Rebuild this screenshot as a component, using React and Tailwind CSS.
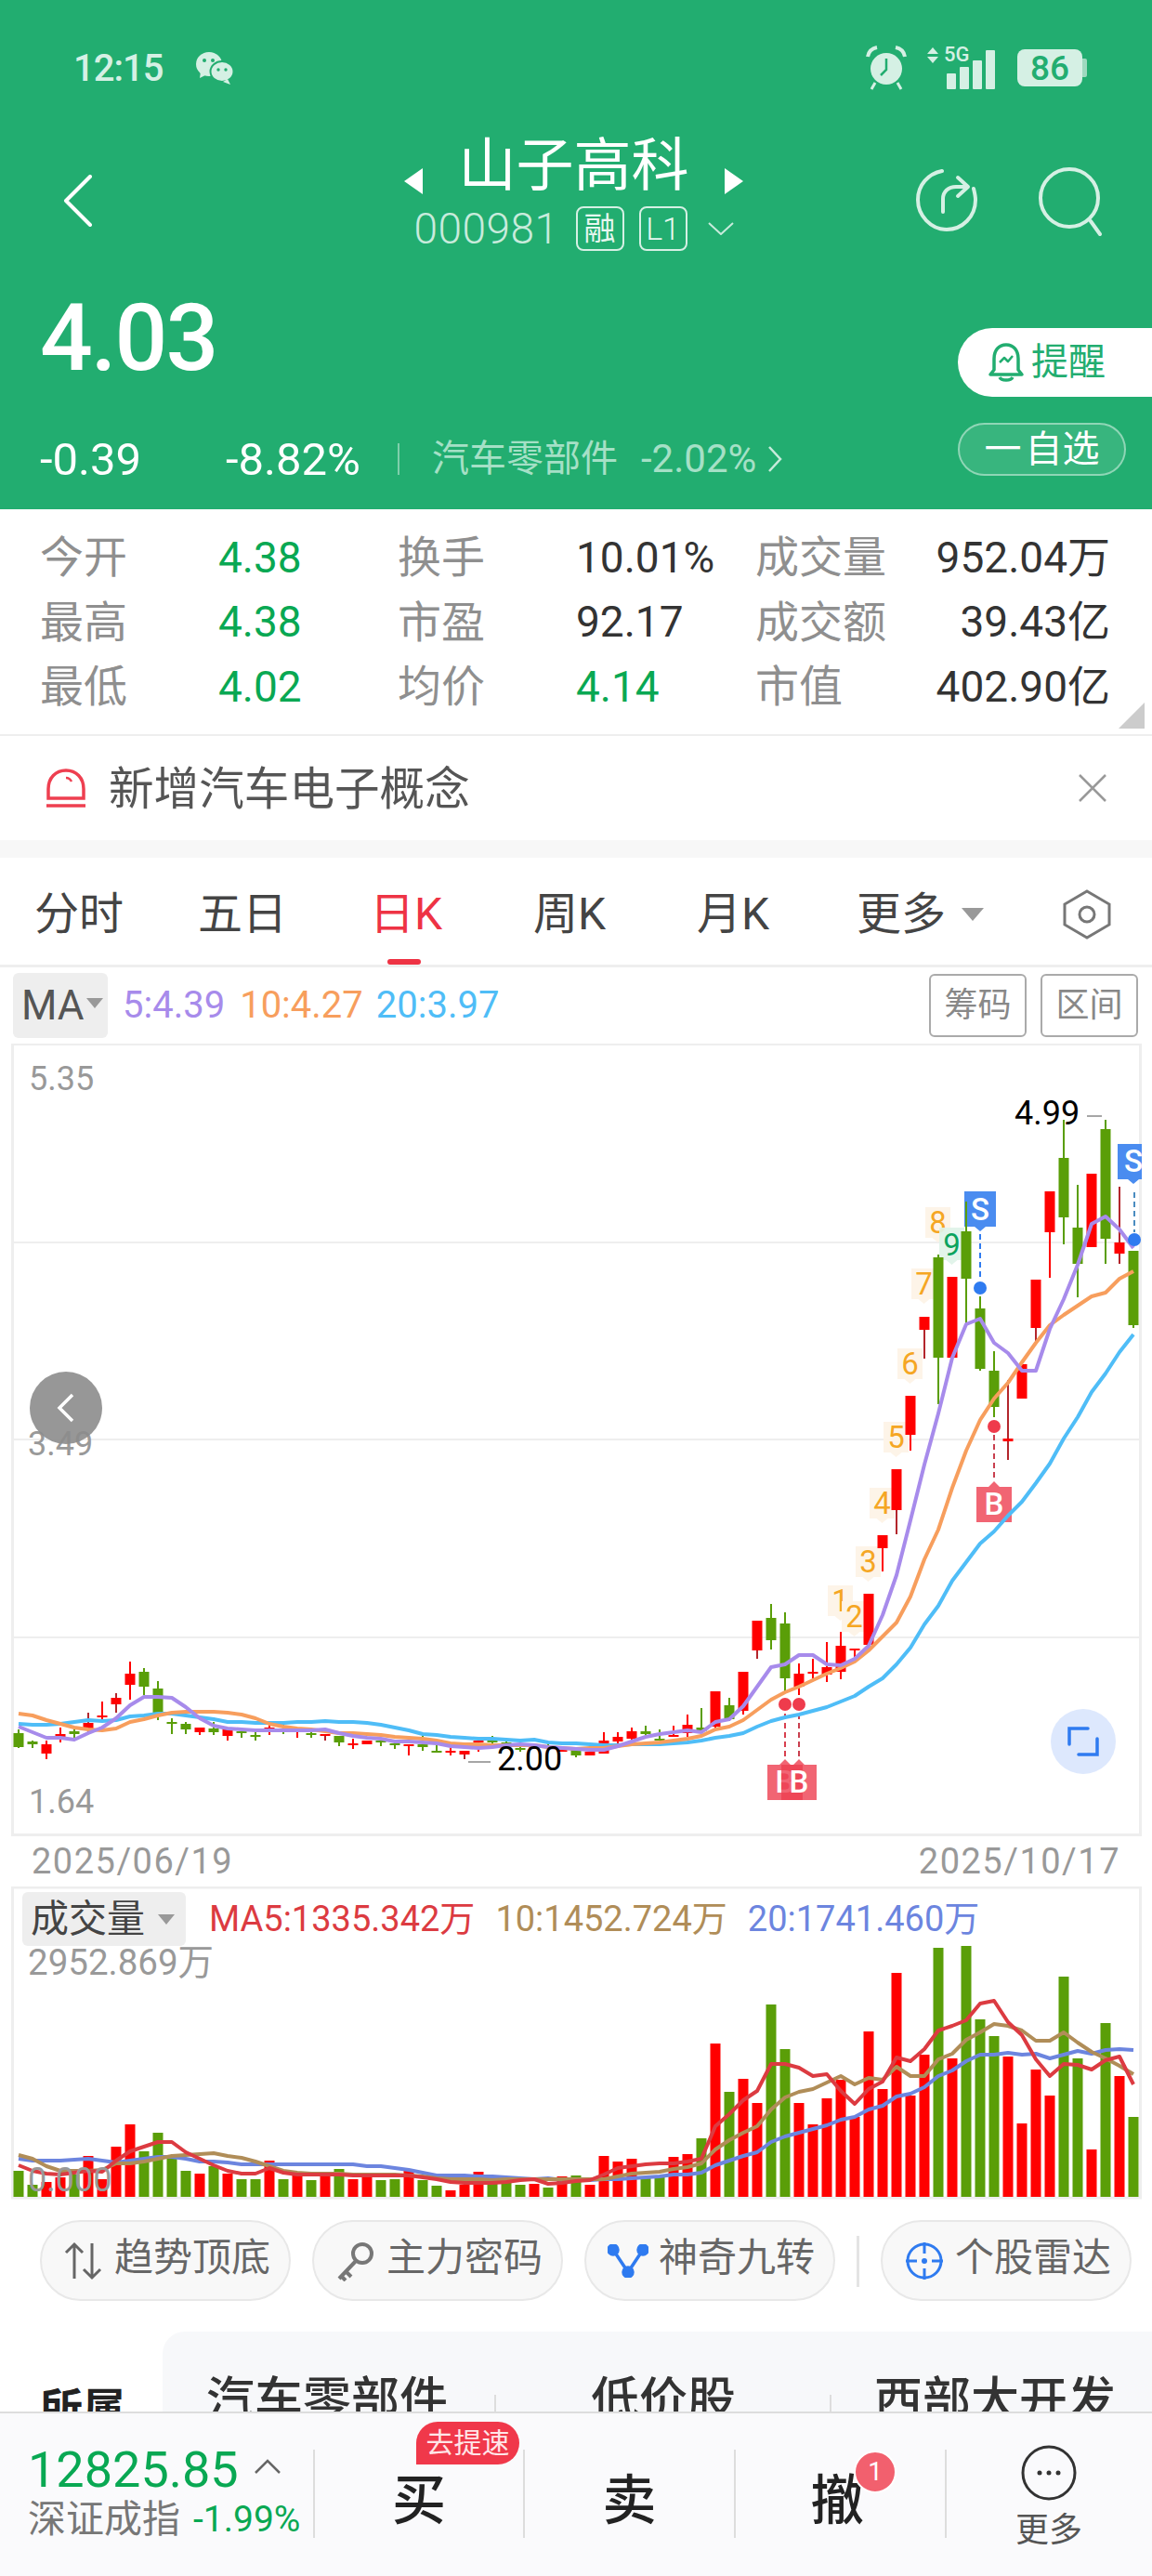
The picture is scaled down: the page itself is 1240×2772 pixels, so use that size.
import React from "react";

// candles: [bodyTop, bodyBottom, wickTop, wickBottom, colour]
const candles = [
  [1867,1882,1863,1883,"g"],[1876,1879,1875,1883,"g"],[1879,1889,1875,1895,"r"],[1868,1872,1861,1877,"r"],[1865,1868,1863,1872,"g"],
  [1856,1862,1845,1867,"r"],[1848,1850,1833,1853,"r"],[1829,1836,1824,1845,"r"],[1803,1815,1790,1831,"r"],[1801,1817,1797,1826,"g"],
  [1819,1845,1811,1853,"g"],[1855,1856,1851,1868,"g"],[1857,1863,1855,1868,"g"],[1861,1866,1861,1869,"r"],[1862,1866,1855,1869,"g"],
  [1863,1870,1863,1875,"r"],[1865,1866,1863,1872,"g"],[1869,1870,1866,1875,"g"],[1861,1862,1858,1869,"r"],[1862,1863,1858,1868,"g"],
  [1862,1863,1862,1872,"r"],[1867,1868,1863,1872,"g"],[1868,1870,1868,1875,"r"],[1870,1877,1870,1881,"g"],[1878,1879,1873,1884,"r"],
  [1875,1879,1875,1879,"r"],[1875,1876,1875,1881,"g"],[1878,1879,1875,1884,"g"],[1879,1880,1879,1891,"r"],[1879,1882,1870,1886,"g"],
  [1886,1887,1880,1888,"g"],[1886,1887,1883,1891,"r"],[1886,1890,1886,1895,"r"],[1875,1877,1875,1887,"r"],[1875,1877,1870,1883,"g"],
  [1877,1879,1872,1880,"g"],[1883,1884,1880,1887,"g"],[1880,1884,1880,1884,"r"],[1881,1883,1878,1885,"g"],[1883,1887,1883,1887,"r"],
  [1885,1891,1885,1893,"g"],[1887,1891,1887,1891,"r"],[1875,1889,1866,1889,"r"],[1871,1876,1866,1880,"r"],[1865,1873,1861,1876,"r"],
  [1865,1868,1859,1872,"g"],[1873,1874,1863,1875,"g"],[1869,1870,1859,1870,"r"],[1858,1867,1847,1871,"r"],[1861,1865,1840,1867,"g"],
  [1822,1860,1822,1862,"r"],[1837,1852,1829,1854,"g"],[1801,1843,1801,1847,"r"],[1746,1778,1746,1787,"r"],[1743,1767,1728,1777,"g"],
  [1749,1808,1737,1823,"g"],[1803,1817,1792,1826,"r"],[1801,1802,1787,1808,"r"],[1796,1804,1769,1812,"r"],[1773,1801,1758,1809,"r"],
  [1776,1777,1776,1787,"r"],[1717,1772,1717,1777,"r"],[1654,1668,1654,1693,"r"],[1583,1627,1583,1653,"r"],[1504,1546,1504,1563,"r"],
  [1419,1433,1419,1464,"r"],[1355,1463,1352,1513,"g"],[1376,1463,1376,1463,"r"],[1327,1378,1295,1427,"g"],[1410,1475,1397,1477,"g"],
  [1477,1516,1456,1527,"g"],[1550,1553,1487,1573,"r"],[1470,1507,1470,1507,"r"],[1379,1431,1379,1445,"r"],[1284,1328,1284,1377,"r"],
  [1248,1312,1207,1341,"g"],[1323,1362,1277,1398,"g"],[1265,1344,1265,1344,"r"],[1217,1335,1207,1362,"g"],[1339,1351,1279,1362,"r"],
  [1348,1428,1348,1431,"g"],
];
const darkWicks = [5, 7, 22, 32, 53, 63, 65, 71, 73, 79];

const ma5 = [1860,1866,1872,1872,1874,1867,1861,1851,1837,1828,1828,1829,1839,1851,1859,1862,1863,1864,1864,1864,1864,1864,1863,1867,1870,1872,1873,1876,1876,1877,1878,1881,1882,1883,1882,1880,1879,1880,1882,1883,1884,1885,1885,1881,1876,1871,1868,1866,1864,1866,1855,1852,1838,1817,1796,1793,1783,1783,1793,1794,1787,1773,1740,1697,1638,1578,1523,1463,1427,1421,1447,1458,1477,1477,1432,1400,1363,1319,1311,1325,1345];
const ma10 = [1846,1848,1853,1857,1861,1863,1864,1862,1855,1852,1848,1845,1844,1844,1844,1845,1847,1851,1857,1860,1862,1863,1865,1867,1867,1868,1869,1871,1872,1873,1875,1878,1879,1879,1880,1880,1880,1880,1882,1883,1884,1883,1883,1881,1879,1878,1877,1875,1873,1870,1863,1860,1853,1842,1831,1823,1817,1810,1803,1797,1790,1778,1763,1748,1720,1680,1648,1603,1563,1530,1507,1490,1468,1447,1428,1417,1407,1397,1393,1378,1370];
const ma20 = [1857,1858,1858,1857,1855,1853,1854,1853,1849,1848,1846,1846,1848,1850,1852,1855,1855,1856,1856,1856,1855,1855,1854,1855,1855,1856,1858,1861,1864,1868,1869,1871,1872,1873,1873,1874,1875,1874,1877,1878,1878,1879,1880,1880,1879,1879,1879,1878,1877,1875,1872,1870,1867,1860,1854,1850,1847,1843,1839,1833,1827,1817,1808,1793,1775,1750,1730,1703,1683,1663,1650,1633,1618,1598,1577,1550,1527,1500,1480,1457,1438];

// volume bars: [top, colour]
const volumes = [
  [2338,"g"],[2353,"g"],[2350,"r"],[2345,"r"],[2342,"g"],[2322,"r"],[2347,"r"],[2312,"r"],[2288,"r"],[2317,"g"],[2297,"g"],[2323,"g"],[2338,"g"],[2341,"r"],[2333,"g"],[2341,"r"],[2347,"g"],[2347,"g"],[2327,"r"],[2347,"g"],
  [2343,"r"],[2348,"g"],[2344,"r"],[2336,"g"],[2347,"r"],[2343,"r"],[2348,"g"],[2347,"g"],[2338,"r"],[2348,"g"],[2354,"g"],[2359,"r"],[2353,"r"],[2339,"r"],[2350,"g"],[2350,"g"],[2353,"g"],[2352,"r"],[2356,"g"],[2344,"r"],
  [2343,"g"],[2353,"r"],[2322,"r"],[2328,"r"],[2325,"r"],[2345,"g"],[2345,"g"],[2323,"r"],[2320,"r"],[2303,"g"],[2201,"r"],[2253,"g"],[2239,"r"],[2265,"r"],[2159,"g"],[2207,"g"],[2265,"r"],[2288,"r"],[2260,"r"],[2240,"r"],
  [2280,"r"],[2188,"r"],[2250,"r"],[2125,"r"],[2257,"r"],[2213,"r"],[2098,"g"],[2217,"r"],[2096,"g"],[2175,"g"],[2193,"g"],[2215,"r"],[2287,"r"],[2229,"r"],[2257,"r"],[2129,"g"],[2217,"g"],[2315,"r"],[2179,"g"],[2236,"r"],[2280,"g"],
];
const volMa5 = [2332,2338,2341,2342,2340,2338,2339,2327,2317,2312,2307,2307,2318,2325,2332,2338,2341,2341,2335,2340,2342,2342,2342,2342,2343,2343,2343,2343,2343,2345,2347,2350,2351,2351,2351,2350,2348,2347,2352,2351,2349,2348,2342,2335,2333,2331,2330,2330,2328,2325,2290,2277,2262,2252,2223,2223,2227,2236,2234,2252,2266,2250,2242,2216,2220,2207,2187,2182,2176,2158,2155,2178,2192,2218,2236,2223,2224,2229,2219,2215,2245];
const volMa10 = [2321,2325,2333,2338,2338,2338,2337,2330,2330,2328,2325,2322,2321,2320,2319,2322,2324,2328,2333,2338,2340,2341,2341,2341,2342,2342,2342,2342,2343,2344,2346,2347,2347,2347,2348,2347,2347,2347,2347,2347,2347,2347,2347,2344,2341,2340,2339,2336,2334,2330,2315,2305,2297,2290,2272,2259,2253,2250,2243,2236,2245,2238,2240,2226,2236,2236,2218,2212,2197,2189,2180,2182,2187,2198,2198,2189,2200,2210,2217,2225,2234];
const volMa20 = [2325,2327,2327,2327,2326,2325,2327,2329,2327,2325,2323,2323,2325,2328,2328,2329,2331,2331,2331,2331,2331,2331,2331,2331,2331,2333,2333,2335,2337,2340,2343,2343,2343,2344,2344,2345,2346,2347,2346,2348,2348,2348,2347,2347,2346,2345,2344,2342,2342,2340,2332,2327,2322,2318,2307,2301,2297,2293,2289,2283,2280,2272,2268,2258,2255,2248,2236,2230,2220,2213,2213,2211,2213,2212,2217,2213,2209,2212,2208,2207,2208];

const xAt = (i) => 20 + 15 * i;
const linePoints = (ys) => ys.map((y, i) => `${xAt(i)},${y}`).join(" ");

const GREEN = "#5a9e08";
const RED = "#ff0000";

const stats = [
  ["今开", "4.38", "g", "换手", "10.01%", "d", "成交量", "952.04万"],
  ["最高", "4.38", "g", "市盈", "92.17", "d", "成交额", "39.43亿"],
  ["最低", "4.02", "g", "均价", "4.14", "g", "市值", "402.90亿"],
];

const seqTags = [
  [889, 1708, "1"], [904, 1725, "2"], [919, 1666, "3"], [934, 1603, "4"], [949, 1532, "5"],
  [964, 1453, "6"], [979, 1367, "7"], [994, 1301, "8"],
];

function Tag({ x, y, w, h, fill, opacity = 1 }) {
  const cx = x + w / 2;
  return (
    <path
      d={`M${x + 2} ${y}H${x + w - 2}V${y + h}H${cx + 6}L${cx} ${y + h + 5}L${cx - 6} ${y + h}H${x + 2}Z`}
      fill={fill}
      fillOpacity={opacity}
    />
  );
}

function BuyTag({ x, y }) {
  const cx = x + 19;
  return (
    <g>
      <path d={`M${x} ${y}H${cx - 6}L${cx} ${y - 6}L${cx + 6} ${y}H${x + 38}V${y + 38}H${x}Z`} fill="#ee3f50" fillOpacity="0.8" />
      <text x={cx} y={y + 30} textAnchor="middle" fontSize="33" fontWeight="500" fill="#fff" fontFamily="Roboto">B</text>
    </g>
  );
}

function KChart() {
  return (
    <svg viewBox="12 1125 1217 853" className="block w-[1217px] h-[853px]">
      <rect x="13.5" y="1125.5" width="1214" height="851" fill="#fff" stroke="#eeeeee" strokeWidth="3" />
      {[1339, 1551, 1764].map((y) => (
        <line key={y} x1="14" x2="1226" y1={y} y2={y} stroke="#eeeeee" strokeWidth="2" />
      ))}

      {seqTags.map(([x, y, n]) => (
        <g key={n}>
          <Tag x={x} y={y} w={31} h={33} fill="#fdf3e6" opacity={0.92} />
          <text x={x + 15.5} y={y + 28} textAnchor="middle" fontSize="33" fill="#f5a623" fontFamily="Roboto">{n}</text>
        </g>
      ))}
      <Tag x={1009} y={1323} w={31} h={35} fill="#dff3e8" opacity={0.92} />
      <text x={1024.5} y={1353} textAnchor="middle" fontSize="33" fill="#0ba35e" fontFamily="Roboto">9</text>

      <Tag x={1036} y={1284} w={38} h={38} fill="#4a8cf0" />
      <text x={1055} y={1315} textAnchor="middle" fontSize="33" fontWeight="500" fill="#fff" fontFamily="Roboto">S</text>
      <Tag x={1201} y={1233} w={38} h={38} fill="#4a8cf0" />
      <text x={1220} y={1263} textAnchor="middle" fontSize="33" fontWeight="500" fill="#fff" fontFamily="Roboto">S</text>
      <BuyTag x={1051} y={1602} />
      <BuyTag x={826} y={1901} />
      <BuyTag x={841} y={1901} />

      <line x1="1055" x2="1055" y1="1330" y2="1378" stroke="#2f7bf0" strokeWidth="2" strokeDasharray="6 4" />
      <line x1="1221" x2="1221" y1="1285" y2="1328" stroke="#4a8cc0" strokeWidth="2" strokeDasharray="6 4" />
      <line x1="1070" x2="1070" y1="1546" y2="1596" stroke="#c9404f" strokeWidth="2" strokeDasharray="6 4" />
      <line x1="845" x2="845" y1="1846" y2="1895" stroke="#d8404f" strokeWidth="2" strokeDasharray="6 4" />
      <line x1="860" x2="860" y1="1846" y2="1895" stroke="#c9404f" strokeWidth="2" strokeDasharray="6 4" />

      {candles.map(([top, bottom, hi, lo, c], i) => {
        const fill = c === "g" ? GREEN : RED;
        const wick = c === "r" && darkWicks.includes(i) ? "#b3262c" : fill;
        return (
          <g key={i}>
            <rect x={xAt(i) - 1} y={hi} width="2" height={lo - hi} fill={wick} />
            <rect x={xAt(i) - 5.5} y={top} width="11" height={Math.max(bottom - top, 2)} fill={fill} />
          </g>
        );
      })}

      <polyline points={linePoints(ma20)} fill="none" stroke="#4fbdf7" strokeWidth="4" strokeLinejoin="round" />
      <polyline points={linePoints(ma10)} fill="none" stroke="#f79e5d" strokeWidth="4" strokeLinejoin="round" />
      <polyline points={linePoints(ma5)} fill="none" stroke="#a78beb" strokeWidth="4" strokeLinejoin="round" />

      <circle cx="1055" cy="1388" r="7" fill="#2f7bf0" />
      <circle cx="1221" cy="1336" r="7" fill="#2f7bf0" />
      <circle cx="1070" cy="1537" r="7" fill="#ef3b4c" />
      <circle cx="845" cy="1836" r="7" fill="#ef3b4c" />
      <circle cx="860" cy="1836" r="7" fill="#ef3b4c" />

      <line x1="1170" x2="1186" y1="1203" y2="1203" stroke="#888" strokeWidth="1.5" />
      <line x1="504" x2="528" y1="1898" y2="1898" stroke="#888" strokeWidth="1.5" />
    </svg>
  );
}

function VolumeChart() {
  return (
    <svg viewBox="12 2032 1217 337" className="block w-[1217px] h-[337px]">
      <rect x="13.5" y="2033" width="1214" height="334" fill="#fff" stroke="#eeeeee" strokeWidth="3" />
      {volumes.map(([top, c], i) => (
        <rect key={i} x={xAt(i) - 5.5} y={top} width="11" height={2366 - top} fill={c === "g" ? GREEN : RED} />
      ))}
      <polyline points={linePoints(volMa20)} fill="none" stroke="#6c85df" strokeWidth="4" strokeLinejoin="round" />
      <polyline points={linePoints(volMa10)} fill="none" stroke="#b08d58" strokeWidth="4" strokeLinejoin="round" />
      <polyline points={linePoints(volMa5)} fill="none" stroke="#dc3b41" strokeWidth="4" strokeLinejoin="round" />
    </svg>
  );
}

function Pill({ icon, label }) {
  return (
    <div className="w-[270px] h-[87px] shrink-0 flex items-center gap-[10px] pl-[22px] rounded-full border-2 border-[#e8e8e8] bg-[#f8f8f8] text-[42px] leading-none text-[#666666]">
      <span className="w-[46px] flex justify-center shrink-0">{icon}</span>
      <span className="-mt-[6px] whitespace-nowrap">{label}</span>
    </div>
  );
}

function Triangle({ className }) {
  return <span className={`w-0 h-0 border-x-[9px] border-x-transparent border-t-[11px] border-t-[#999999] ${className || ""}`} />;
}

export default function App() {
  return (
    <div className="relative w-[1240px] h-[2772px] overflow-hidden bg-white flex flex-col [font-family:Roboto,'Noto_Sans_CJK_SC',sans-serif]">
      {/* green header */}
      <div className="h-[548px] shrink-0 bg-[#22ad70] flex flex-col">
        <div className="h-[146px] flex items-center justify-between pl-[79px] pr-[70px] text-[#d5f0e4]">
          <div className="flex items-center gap-[30px]">
            <span className="text-[40px] font-medium leading-none tracking-tight mt-[2px]">12:15</span>
            <svg className="ml-[5px]" width="42" height="36" viewBox="0 0 42 36" fill="#d5f0e4">
              <ellipse cx="15" cy="14" rx="14" ry="13" />
              <path d="M6 22l-1 7 8-4z" />
              <ellipse cx="29" cy="22" rx="12.5" ry="11" stroke="#22ad70" strokeWidth="2" />
              <path d="M35 30l3 6-8-3z" />
              <circle cx="10" cy="10" r="2" fill="#22ad70" />
              <circle cx="19" cy="10" r="2" fill="#22ad70" />
              <circle cx="25" cy="20" r="1.7" fill="#22ad70" />
              <circle cx="33" cy="20" r="1.7" fill="#22ad70" />
            </svg>
          </div>
          <div className="flex items-center gap-[20px]">
            <svg width="46" height="48" viewBox="0 0 46 48" fill="none" stroke="#d5f0e4">
              <circle cx="23" cy="25" r="17" fill="#d5f0e4" stroke="none" />
              <path d="M23 14v12l-6 6" stroke="#22ad70" strokeWidth="2.5" />
              <path d="M3 12C4 6 8 3 13 2M43 12C42 6 38 3 33 2" strokeWidth="4" />
              <path d="M11 40l-4 7M35 40l4 7" strokeWidth="3" />
            </svg>
            <div className="flex items-start h-[46px] w-[78px]">
              <div className="flex flex-col items-center gap-[3px] mt-[1px] w-[13px]">
                <span className="w-0 h-0 border-x-[6px] border-x-transparent border-b-[7px] border-b-[#d5f0e4]" />
                <span className="w-0 h-0 border-x-[6px] border-x-transparent border-t-[7px] border-t-[#d5f0e4]" />
              </div>
              <div className="relative ml-[3px] w-[62px] h-[46px]">
                <span className="absolute left-[3px] -top-[2px] text-[22px] font-medium leading-[22px] whitespace-nowrap">5G</span>
                <div className="absolute bottom-0 left-[6px] right-0 flex items-end gap-[4.5px]">
                  <span className="w-[9.5px] h-[17px] bg-[#d5f0e4] rounded-[1px]" />
                  <span className="w-[9.5px] h-[24px] bg-[#d5f0e4] rounded-[1px]" />
                  <span className="w-[9.5px] h-[31px] bg-[#d5f0e4] rounded-[1px]" />
                  <span className="w-[9.5px] h-[42px] bg-[#d5f0e4] rounded-[1px]" />
                </div>
              </div>
            </div>
            <div className="flex items-center">
              <div className="w-[70px] h-[40px] rounded-[8px] bg-[#d5f0e4] flex items-center justify-center text-[#22ad70] text-[37px] font-medium leading-none">86</div>
              <span className="w-[5px] h-[20px] bg-[#9ed9bf] rounded-r-[2px]" />
            </div>
          </div>
        </div>

        <div className="h-[132px] flex justify-between">
          <div className="w-[200px] pl-[68px] pt-[42px]">
            <svg width="32" height="56" viewBox="0 0 32 56" fill="none" stroke="#ffffff" strokeWidth="4" strokeLinecap="round" strokeLinejoin="round">
              <path d="M29 2L3 28l26 26" />
            </svg>
          </div>
          <div className="flex flex-col items-center text-white ml-[55px]">
            <div className="flex items-center gap-[38px] h-[72px] -mt-[3px]">
              <span className="w-0 h-0 border-y-[14px] border-y-transparent border-r-[20px] border-r-white mt-[32px]" />
              <span className="text-[62px] leading-none">山子高科</span>
              <span className="w-0 h-0 border-y-[14px] border-y-transparent border-l-[20px] border-l-white mt-[32px]" />
            </div>
            <div className="flex items-center h-[52px] mt-[5px] text-[#c8ebdc]">
              <span className="text-[46px] font-light leading-none tracking-[0.5px]">000981</span>
              <span className="ml-[18px] w-[52px] h-[48px] rounded-[8px] border-2 border-[#d5f0e4] flex items-center justify-center text-[34px] leading-none text-[#e6f7ef]">融</span>
              <span className="ml-[16px] w-[52px] h-[48px] rounded-[8px] border-2 border-[#d5f0e4] flex items-center justify-center text-[34px] font-light leading-none text-[#e6f7ef]">L1</span>
              <svg className="ml-[22px]" width="28" height="14" viewBox="0 0 28 14" fill="none" stroke="#c8ebdc" strokeWidth="2"><path d="M1 1l13 12L27 1" /></svg>
            </div>
          </div>
          <div className="w-[260px] flex justify-end gap-[66px] pr-[50px] pt-[34px]">
            <svg className="shrink-0" width="66" height="70" viewBox="0 0 66 70" fill="none" stroke="#d5f0e4" strokeWidth="4" strokeLinecap="round" strokeLinejoin="round">
              <path d="M28 4C13 7 2 19 2 35c0 17 14 32 31 32s31-14 31-32c0-4-1-8-2-12" />
              <path d="M29 48V34c0-8 6-13 14-13h10" />
              <path d="M45 11l11 10-11 10" />
            </svg>
            <svg className="shrink-0" width="72" height="74" viewBox="0 0 72 74" fill="none" stroke="#d5f0e4" strokeWidth="4" strokeLinecap="round">
              <circle cx="33" cy="33" r="31" />
              <path d="M56 58l10 14" />
            </svg>
          </div>
        </div>

        <div className="flex-1 flex justify-between">
          <div className="flex flex-col pl-[43px]">
            <div className="h-[136px] flex items-end">
              <span className="text-[100px] font-medium leading-none text-white tracking-[-2px]">4.03</span>
            </div>
            <div className="mt-[60px] flex items-center h-[40px] text-white text-[49px] leading-none">
              <span className="w-[200px]">-0.39</span>
              <span className="w-[185px]">-8.82%</span>
              <span className="w-[2px] h-[34px] bg-[#7fcfab]" />
              <span className="ml-[35px] text-[40px] text-[#a5e0c6]">汽车零部件</span>
              <span className="ml-[25px] text-[42px] text-[#a5e0c6]">-2.02%</span>
              <svg className="ml-[12px]" width="16" height="30" viewBox="0 0 16 30" fill="none" stroke="#c8ebdc" strokeWidth="2.5"><path d="M2 2l12 13L2 28" /></svg>
            </div>
          </div>
          <div className="flex flex-col items-end pt-[75px]">
            <div className="w-[209px] h-[74px] rounded-l-full bg-white flex items-center pl-[32px] gap-[7px]">
              <svg width="40" height="44" viewBox="0 0 40 44" fill="none" stroke="#22ad70" strokeWidth="3.5" strokeLinejoin="round">
                <path d="M7 30V18C7 9 12 3 20 3s13 6 13 15v12l4 5H3z" />
                <path d="M13 38c2 4 12 4 14 0" />
                <path d="M13 22l5-5 4 4 5-6" strokeWidth="2.5" />
              </svg>
              <span className="text-[40px] leading-none text-[#22ad70]">提醒</span>
            </div>
            <div className="mt-[28px] mr-[28px] w-[181px] h-[57px] rounded-full border-2 border-[#8fd6b6] bg-white/10 flex items-center justify-center gap-[4px] text-white text-[40px] leading-none">
              <span>一</span><span>自选</span>
            </div>
          </div>
        </div>
      </div>

      {/* quote stats */}
      <div className="relative h-[244px] shrink-0 pt-[17px] pl-[43px] pr-[45px] border-b-2 border-[#eeeeee]">
        <div className="grid grid-cols-[192px_193px_192px_193px_1fr_auto] auto-rows-[69.5px] items-center text-[46px] leading-none">
          {stats.map((row) => (
            <React.Fragment key={row[0]}>
              <span className="text-[47px] text-[#8f8f8f]">{row[0]}</span>
              <span className="text-[#09a853]">{row[1]}</span>
              <span className="text-[47px] text-[#8f8f8f]">{row[3]}</span>
              <span className={row[5] === "g" ? "text-[#09a853]" : "text-[#333333]"}>{row[4]}</span>
              <span className="text-[47px] text-[#8f8f8f]">{row[6]}</span>
              <span className="text-[#333333] text-right">{row[7]}</span>
            </React.Fragment>
          ))}
        </div>
        <svg className="absolute right-[8px] bottom-[6px]" width="28" height="28" viewBox="0 0 28 28"><path d="M28 0v28H0z" fill="#cccccc" /></svg>
      </div>

      {/* notice */}
      <div className="h-[112px] shrink-0 flex items-center pl-[48px] pr-[48px]">
        <svg width="46" height="44" viewBox="0 0 46 44" fill="none" stroke="#ee3f50" strokeWidth="3.5">
          <path d="M4 33V23C4 11 12 3 23 3s19 8 19 20v10z" />
          <path d="M2 41h42" />
          <path d="M23 11c3 0 5 2 6 4" strokeWidth="2.5" />
        </svg>
        <span className="ml-[23px] mt-[4px] text-[48.6px] leading-none text-[#555555]">新增汽车电子概念</span>
        <svg className="ml-auto" width="32" height="32" viewBox="0 0 32 32" fill="none" stroke="#999999" strokeWidth="2.5"><path d="M2 2l28 28M30 2L2 30" /></svg>
      </div>
      <div className="h-[19px] shrink-0 bg-[#f7f7f7]" />

      {/* period tabs */}
      <div className="relative h-[118px] shrink-0 flex items-center pt-[6px] -ml-[3px] border-b-[3px] border-[#eeeeee] text-[48px] leading-none text-[#444444]">
        <span className="w-[176px] text-center">分时</span>
        <span className="w-[176px] text-center">五日</span>
        <span className="relative w-[176px] h-full flex items-center justify-center text-[#ee3344]">
          日K
          <span className="absolute bottom-0 left-[68px] w-[36px] h-[6px] rounded-full bg-[#ee3344]" />
        </span>
        <span className="w-[176px] text-center">周K</span>
        <span className="w-[176px] text-center">月K</span>
        <span className="w-[200px] pl-[45px] flex items-center gap-[17px]">更多<Triangle className="border-x-[12px] border-t-[14px]" /></span>
        <svg className="ml-[67px]" width="52" height="54" viewBox="0 0 52 54" fill="none" stroke="#777777" strokeWidth="3">
          <path d="M26 2l24 14v22L26 52 2 38V16z" />
          <circle cx="26" cy="27" r="8" />
        </svg>
      </div>

      {/* MA legend */}
      <div className="h-[82px] shrink-0 flex items-center pl-[14px] pr-[15px] text-[40px] leading-none">
        <div className="w-[102px] h-[70px] rounded-[6px] bg-[#eeeeee] flex items-center pl-[9px] text-[44px] text-[#555555]">
          MA<Triangle className="ml-[2px] mb-[6px]" />
        </div>
        <span className="ml-[16px] text-[#a78beb]">5:4.39</span>
        <span className="ml-[16px] text-[#f79e5d]">10:4.27</span>
        <span className="ml-[14px] text-[#4fbdf7]">20:3.97</span>
        <span className="ml-auto w-[105px] h-[68px] rounded-[6px] border-2 border-[#aaaaaa] flex items-center justify-center text-[36px] text-[#888888]">筹码</span>
        <span className="ml-[15px] w-[105px] h-[68px] rounded-[6px] border-2 border-[#aaaaaa] flex items-center justify-center text-[36px] text-[#888888]">区间</span>
      </div>

      {/* candle chart */}
      <div className="relative h-[853px] shrink-0 ml-[12px]">
        <KChart />
        <span className="absolute left-[19px] top-[20px] text-[36px] leading-none text-[#999999]">5.35</span>
        <span className="absolute left-[18px] top-[413px] text-[36px] leading-none text-[#999999]">3.49</span>
        <span className="absolute left-[19px] top-[798px] text-[36px] leading-none text-[#999999]">1.64</span>
        <span className="absolute left-[1080px] top-[57px] text-[36px] leading-none text-black">4.99</span>
        <span className="absolute left-[523px] top-[752px] text-[36px] leading-none text-black">2.00</span>
        <div className="absolute left-[20px] top-[353px] w-[78px] h-[78px] rounded-full bg-[#8c8c8c]/90 flex items-center justify-center">
          <svg width="20" height="32" viewBox="0 0 20 32" fill="none" stroke="#ffffff" strokeWidth="3.5"><path d="M17 2L3 16l14 14" /></svg>
        </div>
        <div className="absolute left-[1119px] top-[716px] w-[70px] h-[70px] rounded-full bg-[#dde8fd] flex items-center justify-center">
          <svg width="34" height="32" viewBox="0 0 34 32" fill="none" stroke="#2f7bf0" strokeWidth="3.5" strokeLinecap="round">
            <path d="M2 19V2h20M32 13v17H12" />
          </svg>
        </div>
      </div>

      {/* dates */}
      <div className="h-[54px] shrink-0 flex items-center justify-between pl-[34px] pr-[34px] text-[38px] leading-none tracking-[1.5px] text-[#999999]">
        <span>2025/06/19</span>
        <span>2025/10/17</span>
      </div>

      {/* volume chart */}
      <div className="relative h-[337px] shrink-0 ml-[12px]">
        <VolumeChart />
        <div className="absolute left-[12px] top-[6px] w-[176px] h-[58px] rounded-[6px] bg-[#eeeeee] flex items-center pl-[9px] text-[41px] leading-none text-[#444444]">
          成交量<Triangle className="ml-[14px]" />
        </div>
        <div className="absolute left-[213px] top-[16px] flex gap-[22px] text-[38px] leading-none whitespace-nowrap">
          <span className="text-[#dc3b41]">MA5:1335.342万</span>
          <span className="text-[#b08d58]">10:1452.724万</span>
          <span className="text-[#6c85df]">20:1741.460万</span>
        </div>
        <span className="absolute left-[18px] top-[63px] text-[38.5px] leading-none text-[#999999]">2952.869万</span>
        <span className="absolute left-[18px] top-[298px] text-[36px] leading-none text-[#999999]">0.000</span>
      </div>

      {/* feature pills */}
      <div className="h-[109px] shrink-0 flex items-end pl-[43px] gap-[23px]">
        <Pill
          label="趋势顶底"
          icon={
            <svg width="44" height="42" viewBox="0 0 44 42" fill="none" stroke="#666666" strokeWidth="3">
              <path d="M12 40V3M3 12l9-9 9 9M31 2v37M22 30l9 9 9-9" />
            </svg>
          }
        />
        <Pill
          label="主力密码"
          icon={
            <svg width="44" height="44" viewBox="0 0 44 44" fill="none" stroke="#777777" strokeWidth="4">
              <circle cx="29" cy="14" r="10" />
              <path d="M22 22L4 41M11 33l6 6M6 38l5 5" />
            </svg>
          }
        />
        <Pill
          label="神奇九转"
          icon={
            <svg width="44" height="36" viewBox="0 0 44 36" fill="none" stroke="#2f7bf0" strokeWidth="3.5">
              <path d="M6 6l16 24L38 6" />
              <circle cx="6" cy="6" r="5" fill="#2f7bf0" />
              <circle cx="38" cy="6" r="5" fill="#2f7bf0" />
              <circle cx="22" cy="30" r="5" fill="#2f7bf0" />
            </svg>
          }
        />
        <span className="w-[3px] h-[55px] bg-[#e4e4e4] mb-[15px] shrink-0" />
        <Pill
          label="个股雷达"
          icon={
            <svg width="42" height="42" viewBox="0 0 42 42" fill="none" stroke="#2f7bf0" strokeWidth="3">
              <circle cx="21" cy="21" r="18" />
              <path d="M21 1v12M21 29v12M1 21h12M29 21h12" />
              <circle cx="21" cy="21" r="3" fill="#2f7bf0" stroke="none" />
            </svg>
          }
        />
      </div>

      {/* related concepts, cut off by the bottom bar */}
      <div className="h-[119px] shrink-0 overflow-hidden flex">
        <div className="w-[175px] pl-[43px] pt-[93px] text-[46px] font-bold leading-none text-[#222222]">所属</div>
        <div className="flex-1 mt-[33px] rounded-tl-[24px] bg-[#f7f8fa] flex pt-[49px] text-[52px] leading-none text-[#333333] font-medium">
          <span className="ml-[47px] w-[310px] whitespace-nowrap">汽车零部件</span>
          <span className="mt-[19px] w-[2px] h-[40px] bg-[#dddddd]" />
          <span className="ml-[102px] w-[257px] whitespace-nowrap">低价股</span>
          <span className="mt-[19px] w-[2px] h-[40px] bg-[#dddddd]" />
          <span className="ml-[46px] whitespace-nowrap">西部大开发</span>
        </div>
      </div>

      {/* trade bar */}
      <div className="flex-1 border-t-2 border-[#dddddd] bg-[#fafafc] flex items-start pt-[39px]">
        <div className="w-[339px] h-[95px] border-r-2 border-[#dddddd] pl-[30px] flex flex-col">
          <div className="flex items-center h-[50px] -mt-[3px]">
            <span className="text-[54px] leading-none text-[#09a853]">12825.85</span>
            <svg className="ml-[16px] mb-[8px]" width="30" height="16" viewBox="0 0 30 16" fill="none" stroke="#666666" strokeWidth="2.5"><path d="M2 15L15 2l13 13" /></svg>
          </div>
          <div className="flex items-center mt-[8px] h-[46px]">
            <span className="text-[41px] leading-none text-[#777777]">深证成指</span>
            <span className="ml-[14px] text-[39px] leading-none text-[#09a853]">-1.99%</span>
          </div>
        </div>
        <div className="relative w-[226px] h-[95px] border-r-2 border-[#dddddd] flex items-center justify-center text-[58px] font-medium leading-none text-[#222222]">
          <span className="mt-[14px]">买</span>
          <span className="absolute left-[109px] -top-[30px] w-[111px] h-[46px] rounded-full rounded-bl-[6px] bg-[#f0384a] flex items-center justify-center text-[30px] font-normal text-[#ffe5e8]">去提速</span>
        </div>
        <div className="w-[227px] h-[95px] border-r-2 border-[#dddddd] flex items-center justify-center text-[58px] font-medium leading-none text-[#222222]">
          <span className="mt-[14px]">卖</span>
        </div>
        <div className="relative w-[227px] h-[95px] border-r-2 border-[#dddddd] flex items-center justify-center text-[58px] font-medium leading-none text-[#222222]">
          <span className="mt-[14px] -ml-[6px]">撤</span>
          <span className="absolute left-[127px] top-[1px] w-[46px] h-[46px] rounded-full bg-[#f2606e] border-2 border-white flex items-center justify-center text-[28px] font-normal text-white">1</span>
        </div>
        <div className="flex-1 flex flex-col items-center -mt-[5px] -ml-[1px]">
          <svg width="60" height="60" viewBox="0 0 60 60" fill="none" stroke="#333333" strokeWidth="3">
            <circle cx="30" cy="30" r="28" />
            <circle cx="20" cy="30" r="2.5" fill="#333333" stroke="none" />
            <circle cx="30" cy="30" r="2.5" fill="#333333" stroke="none" />
            <circle cx="40" cy="30" r="2.5" fill="#333333" stroke="none" />
          </svg>
          <span className="mt-[14px] text-[36px] leading-none text-[#555555]">更多</span>
        </div>
      </div>
    </div>
  );
}
